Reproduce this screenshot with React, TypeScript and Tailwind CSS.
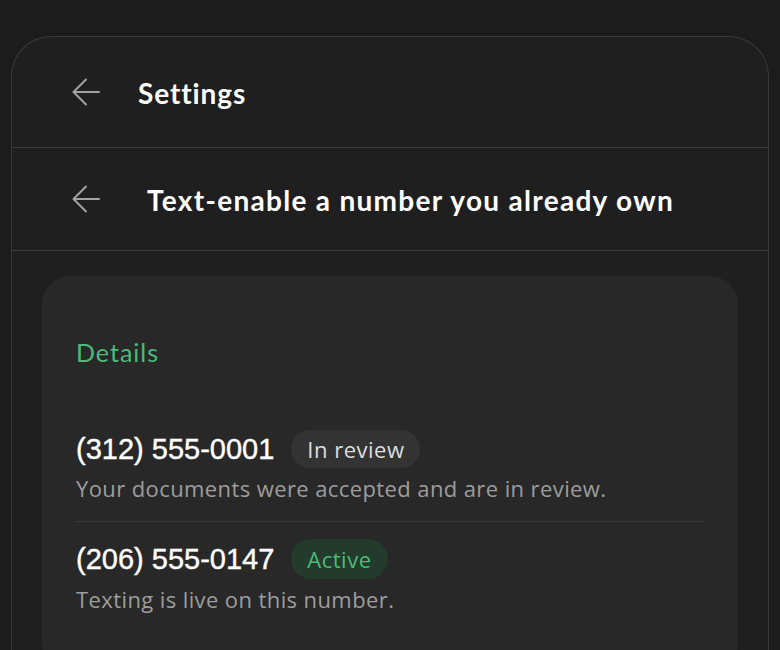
import React from 'react'

const heading = { fontFamily: 'Lato, "Noto Sans", sans-serif' }
const body = { fontFamily: '"Open Sans", "Noto Sans", sans-serif' }
const phone = { fontFamily: '"Liberation Sans", Arial, sans-serif' }

function BackArrow() {
    return (
        <svg width="28" height="28" viewBox="0 0 28 28" fill="none" stroke="#a3a3a3" strokeWidth="2" strokeLinecap="round" strokeLinejoin="round">
            <path d="M27 14H2" />
            <path d="M14 1.5 1.5 14 14 26.5" />
        </svg>
    )
}

type NumberRow = {
    number: string
    status: string
    active: boolean
    note: string
}

const rows: NumberRow[] = [
    { number: '(312) 555-0001', status: 'In review', active: false, note: 'Your documents were accepted and are in review.' },
    { number: '(206) 555-0147', status: 'Active', active: true, note: 'Texting is live on this number.' },
]

export default function App() {
    return (
        <div className="min-h-screen bg-[#1c1c1c] px-[11px] pt-[36px] overflow-hidden h-[650px]">
            <div className="rounded-t-[40px] border border-b-0 border-[#3a3a3a] bg-[#1f1f1f] h-[700px]">
                <div className="flex items-center h-[111px] pl-[60px] border-b border-[#3a3a3a]">
                    <BackArrow />
                    <h1 className="ml-[38px] mt-[1px] text-[28px] font-bold text-white tracking-[0.9px]" style={heading}>Settings</h1>
                </div>
                <div className="flex items-center h-[103px] pl-[60px] border-b border-[#3a3a3a]">
                    <BackArrow />
                    <h2 className="ml-[47px] mt-[1px] text-[28px] font-bold text-white tracking-[1.3px]" style={heading}>Text-enable a number you already own</h2>
                </div>
                <div className="mx-[30px] mt-[25px] rounded-[28px] bg-[#282828] px-[34px] pt-[60px] pb-10">
                    <div className="text-[25px] leading-[32px] tracking-[1px] text-[#4cbb78]" style={heading}>Details</div>
                    <div className="mt-[62px]">
                        {rows.map((row, i) => (
                            <div key={row.number} className={i > 0 ? 'border-t border-[#3a3a3a] pt-[17px]' : ''}>
                                <div className="flex items-center gap-[17px]">
                                    <span className="text-[29px] leading-[38px] text-white [-webkit-text-stroke:0.4px_white]" style={phone}>{row.number}</span>
                                    <span
                                        className={
                                            row.active
                                                ? 'h-[40px] flex items-center rounded-full px-4 bg-[#233a2c] text-[#4cbb78] text-[22px] tracking-[0.5px]'
                                                : 'h-[38px] flex items-center rounded-full px-4 bg-[#333333] text-[#dedede] text-[22px] tracking-[0.5px]'
                                        }
                                        style={body}
                                    >
                                        {row.status}
                                    </span>
                                </div>
                                <p className="mt-[5px] pb-[18px] text-[22px] leading-[30px] tracking-[0.4px] text-[#9d9d9d]" style={body}>{row.note}</p>
                            </div>
                        ))}
                    </div>
                </div>
            </div>
        </div>
    )
}
